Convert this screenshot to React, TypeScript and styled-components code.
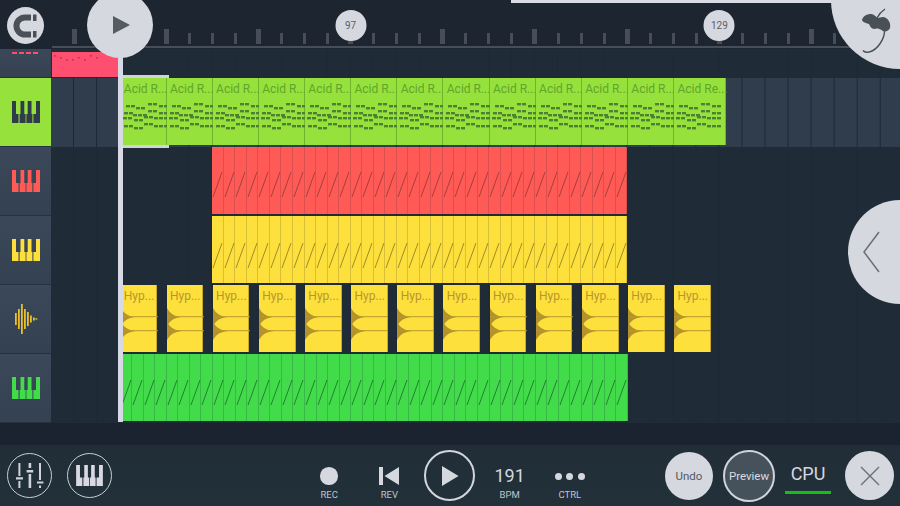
import React from "react";
import styled, { createGlobalStyle } from "styled-components";

const LIGHT = "#d6d8df";
const ICON = "#565b63";
const BEAT = 23.06;
const SEGMENT = 11.54;
const ACID_PITCH = 46.15;

const GlobalStyle = createGlobalStyle`
  html, body {
    margin: 0;
    padding: 0;
    background: #1d2531;
    font-family: Roboto, "Liberation Sans", sans-serif;
  }
`;

const Page = styled.div`
  position: relative;
  width: 900px;
  height: 506px;
  overflow: hidden;
  display: flex;
  flex-direction: column;
  background: #1d2531;
`;

/* ruler */
const Ruler = styled.div`
  height: 49px;
  flex: none;
  padding-left: 52px;
  background: #1d2531;
  box-sizing: border-box;
`;

const TickRow = styled.div`
  display: flex;
  height: 48px;
  box-sizing: border-box;
  padding-left: 10.5px;
  border-bottom: 2px solid #474e58;
`;

const TickCell = styled.div`
  position: relative;
  flex: none;
  width: ${BEAT}px;
  display: flex;
  justify-content: center;
  align-items: flex-end;
  padding-bottom: 2px;
  box-sizing: border-box;
`;

const Tick = styled.div<{ $major: boolean }>`
  width: ${(p) => (p.$major ? 5 : 3)}px;
  height: ${(p) => (p.$major ? 15 : 11)}px;
  background: #474e59;
`;

const BarBadge = styled.div`
  position: absolute;
  top: 10px;
  left: 50%;
  transform: translateX(-50%);
  width: 31px;
  height: 31px;
  border-radius: 50%;
  background: ${LIGHT};
  color: #5a5f67;
  font-size: 10px;
  display: flex;
  align-items: center;
  justify-content: center;
  z-index: 3;
`;

const TopStrip = styled.div`
  position: absolute;
  top: 0;
  left: 511px;
  right: 0;
  height: 3px;
  background: #d9dce4;
  z-index: 3;
`;

const MagnetButton = styled.div`
  position: absolute;
  left: 7px;
  top: 7px;
  width: 37px;
  height: 37px;
  border-radius: 50%;
  background: ${LIGHT};
  z-index: 4;
  display: flex;
  align-items: center;
  justify-content: center;
`;

const BigPlay = styled.div`
  position: absolute;
  left: 87px;
  top: -8px;
  width: 66px;
  height: 66px;
  border-radius: 50%;
  background: ${LIGHT};
  z-index: 6;
  display: flex;
  align-items: center;
  justify-content: center;

  svg {
    margin-left: 3px;
  }
`;

const CornerMenu = styled.div`
  position: absolute;
  right: -69px;
  top: -69px;
  width: 138px;
  height: 138px;
  border-radius: 50%;
  background: ${LIGHT};
  z-index: 4;
`;

const FruitMark = styled.svg`
  position: absolute;
  left: 19px;
  top: 69px;
`;

const PickerTab = styled.div`
  position: absolute;
  right: -52px;
  top: 200px;
  width: 104px;
  height: 104px;
  border-radius: 50%;
  background: ${LIGHT};
  z-index: 4;
`;

const PickerChevron = styled.svg`
  position: absolute;
  left: 15px;
  top: 31px;
`;

const Playhead = styled.div`
  position: absolute;
  left: 118px;
  top: 50px;
  width: 4.5px;
  height: 372px;
  background: #d7d9e4;
  z-index: 5;
`;

/* playlist */
const Playlist = styled.div`
  flex: none;
  display: flex;
  flex-direction: column;
`;

const Row = styled.div<{ $h: number }>`
  display: flex;
  height: ${(p) => p.$h}px;
`;

const TrackHead = styled.div<{ $active?: boolean }>`
  position: relative;
  flex: none;
  width: 51px;
  box-sizing: border-box;
  display: flex;
  align-items: center;
  justify-content: center;
  background: ${(p) => (p.$active ? "#97e13c" : "linear-gradient(#3a4859, #334151)")};
  border-bottom: 1px solid #263240;
`;

const PinkDashes = styled.div`
  position: absolute;
  left: 12px;
  top: 3px;
  width: 27px;
  height: 2px;
  background: repeating-linear-gradient(90deg, #ff4d6d 0 5px, transparent 5px 7px);
`;

const Lane = styled.div<{ $active?: boolean; $start: number; $gap?: number }>`
  flex: 1;
  min-width: 0;
  display: flex;
  align-items: flex-start;
  gap: ${(p) => p.$gap ?? 0}px;
  padding-left: ${(p) => p.$start}px;
  background-color: ${(p) => (p.$active ? "#2f3d4c" : "#1f2c38")};
  background-image:
    linear-gradient(90deg, transparent 22.2px, rgba(10, 18, 26, ${(p) => (p.$active ? 0.5 : 0.12)}) 22.2px, rgba(10, 18, 26, ${(p) => (p.$active ? 0.5 : 0.12)}) 23.06px);
  background-size: ${BEAT}px 100%;
`;

const PinkClip = styled.div`
  position: relative;
  flex: none;
  width: 67px;
  height: 24.5px;
  margin: 3px 0 0 1px;
  background: #ff4f70;
`;

const Clip = styled.div<{ $w: number; $c: string; $edge: string }>`
  position: relative;
  flex: none;
  width: ${(p) => p.$w}px;
  height: 66.5px;
  box-sizing: border-box;
  background: ${(p) => p.$c};
  border-right: 1px solid ${(p) => p.$edge};
`;

const Selection = styled.div`
  position: absolute;
  left: 0;
  right: -3px;
  top: -3px;
  bottom: -3.5px;
  border-top: 3px solid #cfd3da;
  border-bottom: 3.5px solid #cfd3da;
  z-index: 2;
  pointer-events: none;
`;

const ClipTitle = styled.div<{ $c: string }>`
  padding: 4px 0 0 3.3px;
  color: ${(p) => p.$c};
  font-size: 12px;
  line-height: 15px;
  white-space: nowrap;
`;

const ClipDrawing = styled.svg`
  position: absolute;
  left: 0;
  top: 0;
`;

const Gap = styled.div`
  flex: none;
  height: 22px;
  background: #1c2330;
`;

/* bottom toolbar */
const Toolbar = styled.div`
  flex: 1;
  display: flex;
  align-items: center;
  padding: 0 6px 0 7px;
  background: linear-gradient(#212e38, #22303a);
  color: ${LIGHT};
`;

const LeftTools = styled.div`
  flex: none;
  width: 292px;
  display: flex;
  gap: 15px;
`;

const RingButton = styled.div`
  width: 45px;
  height: 45px;
  box-sizing: border-box;
  border: 1.5px solid #c9cdd4;
  border-radius: 50%;
  display: flex;
  align-items: center;
  justify-content: center;
`;

const Transport = styled.div`
  flex: none;
  display: flex;
`;

const TransportCell = styled.div<{ $ring?: boolean }>`
  flex: none;
  width: 60.2px;
  height: 61px;
  box-sizing: border-box;
  padding-top: ${(p) => (p.$ring ? 0 : 21)}px;
  display: flex;
  flex-direction: column;
  align-items: center;
  justify-content: ${(p) => (p.$ring ? "center" : "flex-start")};
`;

const TransportIcon = styled.div`
  height: 20px;
  display: flex;
  align-items: center;
  justify-content: center;
`;

const TransportLabel = styled.div`
  margin-top: 2.5px;
  font-size: 9.5px;
  line-height: 12px;
  color: #bfc5cc;
`;

const RecDot = styled.div`
  width: 17.5px;
  height: 17.5px;
  border-radius: 50%;
  background: ${LIGHT};
`;

const PlayRing = styled.div`
  flex: none;
  width: 51px;
  height: 51px;
  box-sizing: border-box;
  border: 2px solid #d3d6dc;
  border-radius: 50%;
  display: flex;
  align-items: center;
  justify-content: center;

  svg {
    margin-left: 2px;
  }
`;

const Tempo = styled.div`
  font-size: 18px;
  line-height: 20px;
`;

const Dots = styled.div`
  display: flex;
  gap: 4.5px;
`;

const Dot = styled.div`
  width: 7px;
  height: 7px;
  border-radius: 50%;
  background: ${LIGHT};
`;

const RightTools = styled.div`
  margin-left: auto;
  display: flex;
  align-items: center;
`;

const SolidButton = styled.div`
  width: 48px;
  height: 48px;
  margin-right: 10px;
  border-radius: 50%;
  background: ${LIGHT};
  color: #55595f;
  font-size: 11.5px;
  display: flex;
  align-items: center;
  justify-content: center;
`;

const PreviewButton = styled.div`
  width: 52px;
  height: 52px;
  box-sizing: border-box;
  border: 2px solid #cfd3da;
  border-radius: 50%;
  background: #46525b;
  color: #d8dbe0;
  font-size: 11.5px;
  display: flex;
  align-items: center;
  justify-content: center;
`;

const CpuMeter = styled.div`
  width: 66px;
  margin: 6px 4px 0 0;
  display: flex;
  flex-direction: column;
  align-items: center;
`;

const CpuText = styled.div`
  font-size: 18px;
  line-height: 22px;
`;

const CpuBar = styled.div`
  width: 46px;
  height: 3px;
  margin-top: 6px;
  background: #12c012;
`;

const CloseButton = styled.div`
  width: 49px;
  height: 49px;
  border-radius: 50%;
  background: ${LIGHT};
  display: flex;
  align-items: center;
  justify-content: center;
`;

const PianoIcon = ({ color, w = 28, h = 22 }: { color: string; w?: number; h?: number }) => (
  <svg width={w} height={h} viewBox="0 0 28 22" fill={color}>
    <path d="M0 0h4v13h2.5v9H0z" />
    <path d="M8.5 0h3.8v13h1.3v9H7.6v-9h.9z" />
    <path d="M15.7 0h3.8v13h.9v9h-6v-9h1.3z" />
    <path d="M24 0h4v22h-6.6v-9H24z" />
  </svg>
);

const waveBars = [
  [1, 12], [4, 20], [7, 30], [10, 20], [13, 14], [16, 7], [19, 3], [21.5, 1.5],
];

const WaveIcon = () => (
  <svg width="24" height="32" viewBox="0 0 24 32" fill="#e8bf2a">
    {waveBars.map(([x, h]) => (
      <rect key={x} x={x} y={16 - h / 2} width="1.8" height={h} />
    ))}
  </svg>
);

// one bar of the acid pattern, x/y inside the clip
const acidNotes = [
  [5, 27], [10, 27], [15, 29], [20, 29], [27, 25], [32, 25], [38, 27], [43, 27],
  [3, 34], [8, 34], [12, 36], [17, 36], [22, 36], [27, 32], [32, 32], [38, 34], [43, 34],
  [2, 39], [7, 39], [13, 41], [18, 41], [23, 38], [28, 38], [33, 39], [38, 39], [43, 39],
  [3, 47], [8, 47], [13, 49], [18, 49], [23, 45], [28, 45], [33, 47], [38, 47], [43, 47],
];

const AcidNotes = () => (
  <ClipDrawing width="52" height="66" fill="#4f7f33">
    {acidNotes.map(([x, y]) => (
      <rect key={`${x}-${y}`} x={x} y={y} width="4" height="2.4" />
    ))}
  </ClipDrawing>
);

const pinkNotes = [
  [18, 1], [24, 3], [30, 5], [36, 5], [42, 3], [48, 5], [54, 1], [60, 3],
];

const PinkNotes = () => (
  <ClipDrawing width="67" height="24" fill="#b03a55">
    {pinkNotes.map(([x, y]) => (
      <rect key={x} x={x - 16} y={y + 2} width="1.6" height="1.6" />
    ))}
  </ClipDrawing>
);

const Slash = ({ color, top }: { color: string; top: number }) => (
  <ClipDrawing width="12" height="66">
    <line x1="1" y1={top + 25} x2="10" y2={top} stroke={color} strokeWidth="1" />
  </ClipDrawing>
);

const HypWave = () => (
  <ClipDrawing width="37" height="66">
    <g fill="#b3922c">
      <path d="M0 23C3 28 6 31 14 32C6 33 3 36 0 41Z" />
      <path d="M0 37C3 42 6 45 15 46C6 47 3 50 0 55Z" />
    </g>
    <path d="M0 31.7H37M0 45.7H37" stroke="#b89a2c" strokeWidth="1" />
  </ClipDrawing>
);

const acidWidths = [...Array(12).fill(ACID_PITCH), 51.7];
const hypClips = Array.from({ length: 13 }, (_, i) => i);

const App = () => (
  <Page>
    <GlobalStyle />
    <TopStrip />
    <MagnetButton>
      <svg width="26" height="26" viewBox="0 0 26 26" fill="none">
        <path d="M18 4.5H12a8.5 8.5 0 0 0 0 17h6" stroke="#4b5058" strokeWidth="6" />
        <rect x="20" y="1.5" width="3.5" height="6.5" fill="#4b5058" />
        <rect x="20" y="18" width="3.5" height="6.5" fill="#4b5058" />
      </svg>
    </MagnetButton>
    <BigPlay>
      <svg width="17" height="18" viewBox="0 0 17 18" fill={ICON}>
        <path d="M0 0L17 9L0 18Z" />
      </svg>
    </BigPlay>
    <CornerMenu>
      <FruitMark width="50" height="60" viewBox="0 0 50 60">
        <path
          fill="#4a5058"
          d="M12 20C13 16 17 14 21 14C24 14 26 17 28 18C30 18 33 16 36 18C39 20 41 24 40 28C39 31 35 32 33 31C30 29 28 28 25 29C22 29 20 27 19 24C17 23 13 23 12 20Z"
        />
        <path
          fill="none"
          stroke="#4a5058"
          strokeWidth="1.4"
          d="M27 18C29 14 32 11 35 9M34.5 30C35 38 28 50 19 52C16 52.5 14 52 13 50.5"
        />
      </FruitMark>
    </CornerMenu>
    <PickerTab>
      <PickerChevron width="17" height="42" viewBox="0 0 17 42" fill="none">
        <path d="M16 1L1 21L16 41" stroke="#6a6e75" strokeWidth="1.5" />
      </PickerChevron>
    </PickerTab>
    <Playhead />

    <Ruler>
      <TickRow>
        {Array.from({ length: 36 }, (_, i) => (
          <TickCell key={i}>
            <Tick $major={i % 4 === 0} />
            {i === 12 && <BarBadge>97</BarBadge>}
            {i === 28 && <BarBadge>129</BarBadge>}
          </TickCell>
        ))}
      </TickRow>
    </Ruler>

    <Playlist>
      <Row $h={29}>
        <TrackHead>
          <PinkDashes />
        </TrackHead>
        <Lane $start={0}>
          <PinkClip>
            <PinkNotes />
          </PinkClip>
        </Lane>
      </Row>

      <Row $h={69}>
        <TrackHead $active>
          <PianoIcon color="#2f3d4a" />
        </TrackHead>
        <Lane $active $start={69.5}>
          {acidWidths.map((w, i) => (
            <Clip key={i} $w={w} $c="#97e13c" $edge="#6fb62f">
              {i === 0 && <Selection />}
              <ClipTitle $c="#5fa62a">{i === 12 ? "Acid Re..." : "Acid R..."}</ClipTitle>
              <AcidNotes />
            </Clip>
          ))}
        </Lane>
      </Row>

      <Row $h={69}>
        <TrackHead>
          <PianoIcon color="#ff5a55" />
        </TrackHead>
        <Lane $start={161.3}>
          {Array.from({ length: 36 }, (_, i) => (
            <Clip key={i} $w={SEGMENT} $c="#ff5a55" $edge="#d9504e">
              <Slash color="#a83f3c" top={25} />
            </Clip>
          ))}
        </Lane>
      </Row>

      <Row $h={69}>
        <TrackHead>
          <PianoIcon color="#fde03c" />
        </TrackHead>
        <Lane $start={161.3}>
          {Array.from({ length: 36 }, (_, i) => (
            <Clip key={i} $w={SEGMENT} $c="#fde03c" $edge="#d9bf36">
              <Slash color="#a08a2c" top={27} />
            </Clip>
          ))}
        </Lane>
      </Row>

      <Row $h={69}>
        <TrackHead>
          <WaveIcon />
        </TrackHead>
        <Lane $start={69.5} $gap={9.55}>
          {hypClips.map((i) => (
            <Clip key={i} $w={36.6} $c="#fde03c" $edge="#c9aa30">
              <ClipTitle $c="#b8962c">Hyp...</ClipTitle>
              <HypWave />
            </Clip>
          ))}
        </Lane>
      </Row>

      <Row $h={69}>
        <TrackHead>
          <PianoIcon color="#42dc4a" />
        </TrackHead>
        <Lane $start={69.5}>
          {Array.from({ length: 44 }, (_, i) => (
            <Clip key={i} $w={SEGMENT} $c="#42dc4a" $edge="#38b845">
              <Slash color="#237f32" top={26} />
            </Clip>
          ))}
        </Lane>
      </Row>
    </Playlist>

    <Gap />

    <Toolbar>
      <LeftTools>
        <RingButton>
          <svg width="30" height="26" viewBox="0 0 30 26" fill="#cfd2da">
            <path d="M3.4 0h2v13h-2zM1 14.2h7v2.2H1zM3.4 18h2v7h-2z" />
            <path d="M13.6 0h2.6v5h-2.6zM11.6 7h6.6v2.4h-6.6zM13.6 11h2.6v14h-2.6z" />
            <path d="M24 0h2v17h-2zM22 18.4h6.4v2.2H22zM24 22.4h2V25h-2z" />
          </svg>
        </RingButton>
        <RingButton>
          <PianoIcon color="#d9d9e2" w={27} h={21} />
        </RingButton>
      </LeftTools>

      <Transport>
        <TransportCell>
          <TransportIcon>
            <RecDot />
          </TransportIcon>
          <TransportLabel>REC</TransportLabel>
        </TransportCell>
        <TransportCell>
          <TransportIcon>
            <svg width="20" height="18" viewBox="0 0 20 18" fill={LIGHT}>
              <path d="M0 0h4v18H0zM20 0v18L5.5 9z" />
            </svg>
          </TransportIcon>
          <TransportLabel>REV</TransportLabel>
        </TransportCell>
        <TransportCell $ring>
          <PlayRing>
            <svg width="17" height="20" viewBox="0 0 17 20" fill={LIGHT}>
              <path d="M0 0L16.5 10L0 20Z" />
            </svg>
          </PlayRing>
        </TransportCell>
        <TransportCell>
          <TransportIcon>
            <Tempo>191</Tempo>
          </TransportIcon>
          <TransportLabel>BPM</TransportLabel>
        </TransportCell>
        <TransportCell>
          <TransportIcon>
            <Dots>
              <Dot />
              <Dot />
              <Dot />
            </Dots>
          </TransportIcon>
          <TransportLabel>CTRL</TransportLabel>
        </TransportCell>
      </Transport>

      <RightTools>
        <SolidButton>Undo</SolidButton>
        <PreviewButton>Preview</PreviewButton>
        <CpuMeter>
          <CpuText>CPU</CpuText>
          <CpuBar />
        </CpuMeter>
        <CloseButton>
          <svg width="20" height="20" viewBox="0 0 20 20" stroke="#6c6f75" strokeWidth="1.4">
            <path d="M1 1L19 19M19 1L1 19" />
          </svg>
        </CloseButton>
      </RightTools>
    </Toolbar>
  </Page>
);

export default App;
